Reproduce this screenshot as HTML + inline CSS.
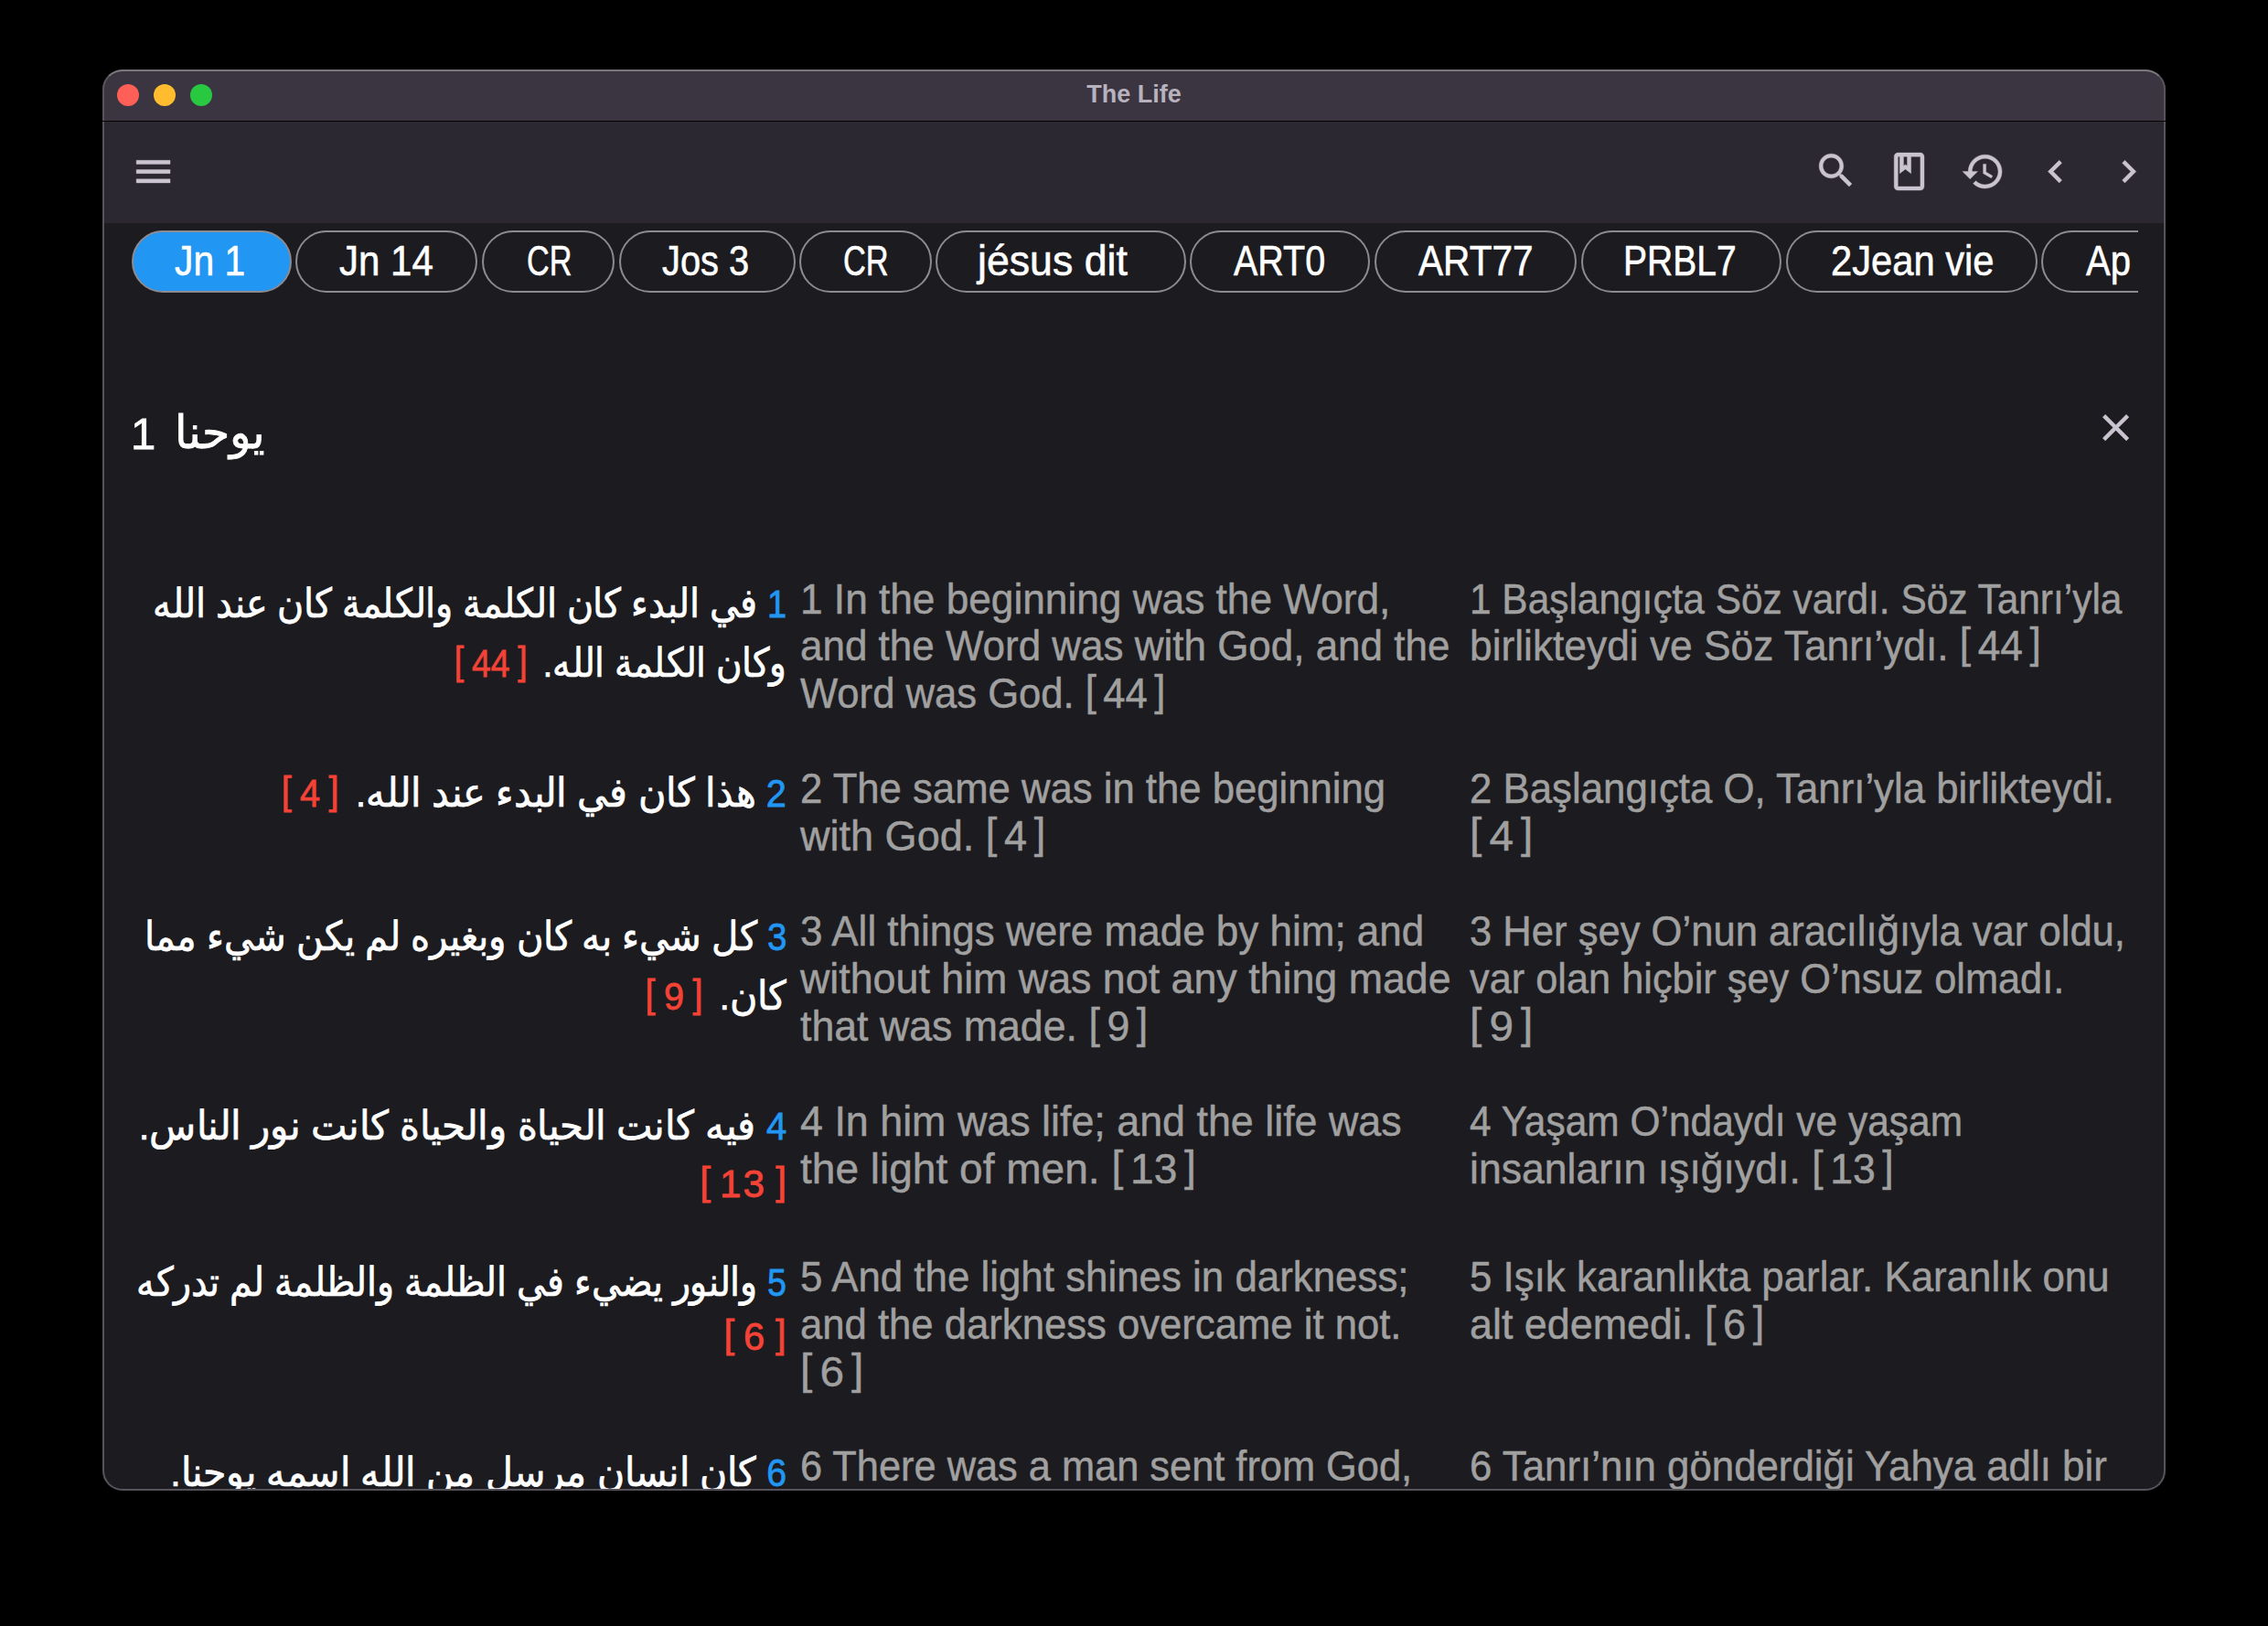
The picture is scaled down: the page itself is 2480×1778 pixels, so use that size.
<!DOCTYPE html>
<html><head><meta charset="utf-8"><title>The Life</title>
<style>
html,body{margin:0;padding:0;background:#000;width:2480px;height:1778px;overflow:hidden;font-family:"Liberation Sans",sans-serif;}
.win{position:absolute;left:112px;top:76px;width:2256px;height:1554px;border-radius:22px;overflow:hidden;background:#1c1b1f;}
.frame{position:absolute;left:112px;top:76px;width:2252px;height:1550px;border:2px solid #56545a;border-top-color:#7a777e;border-radius:22px;}
.title{position:absolute;left:0;top:0;width:100%;height:56px;background:#3b3541;}
.tline{position:absolute;left:0;top:56px;width:100%;height:1px;background:#000;}
.tool{position:absolute;left:0;top:57px;width:100%;height:111px;background:#2c2831;}
.ttl{position:absolute;left:0;width:100%;top:13.5px;text-align:center;font-weight:bold;font-size:27px;line-height:27px;color:#b8b2bf;}
.dot{position:absolute;width:24.5px;height:24.5px;border-radius:50%;top:15.75px;}
.ic{position:absolute;width:49.2px;height:49.2px;}
.chips{position:absolute;left:0;top:0;width:2226px;height:400px;overflow:hidden;}
.chip{position:absolute;top:176px;height:64px;border:2px solid #8d8a90;border-radius:34px;}
.chip.act{background:#2196f3;}
.ct{position:absolute;white-space:nowrap;font-size:47px;line-height:47px;color:#fff;transform-origin:0 0;-webkit-text-stroke:0.6px #fff;}
.tl{position:absolute;white-space:nowrap;font-size:47px;line-height:47px;color:#a0a0a0;transform-origin:0 0;-webkit-text-stroke:0.5px #a0a0a0;}
.al{position:absolute;white-space:nowrap;font-size:44px;line-height:44px;color:#fff;transform-origin:100% 0;-webkit-text-stroke:0.7px #fff;}
.al .b,.al .r{font-size:42px;-webkit-text-stroke:0.8px currentColor;}
.b{color:#2196f3;}
.r{color:#f44336;unicode-bidi:isolate;direction:ltr;margin-right:7px;}
.rn{margin:0 8px;}
.bk{position:relative;top:-3px;}
.r .rn{margin:0 10px;letter-spacing:2px;}
.r.solo{margin-right:0;}
.hd{position:absolute;white-space:nowrap;color:#fff;transform-origin:100% 0;}
.hd{-webkit-text-stroke:0.8px #fff;}
</style></head><body>
<div class="win">
<div class="title"></div><div class="tline"></div><div class="tool"></div>
<div class="ttl">The Life</div>
<div class="dot" style="left:15.75px;background:#fe5f57"></div>
<div class="dot" style="left:55.75px;background:#febc2e"></div>
<div class="dot" style="left:95.75px;background:#28c840"></div>
<svg class="ic" style="left:31.25px;top:86.70px" viewBox="0 0 24 24"><path fill="#cac4d0" stroke="#cac4d0" stroke-width="0.2" d="M3 18h18v-2H3v2zm0-5h18v-2H3v2zm0-7v2h18V6H3z"/></svg>
<svg class="ic" style="left:1870.85px;top:86.35px" viewBox="0 0 24 24"><path fill="#cac4d0" stroke="#cac4d0" stroke-width="0.2" d="M15.5 14h-.79l-.28-.27C15.41 12.590 16 11.11 16 9.5 16 5.91 13.09 3 9.5 3S3 5.91 3 9.5 5.91 16 9.5 16c1.61 0 3.09-.59 4.23-1.57l.27.28v.79l5 4.99L20.490 19l-4.99-5zm-6 0C7.01 14 5 11.99 5 9.5S7.01 5 9.5 5 14 7.01 14 9.5 11.99 14 9.5 14z"/></svg>
<svg class="ic" style="left:1950.80px;top:86.90px" viewBox="0 0 24 24"><path fill="#cac4d0" stroke="#cac4d0" stroke-width="0.2" d="M18 2H6c-1.1 0-2 .9-2 2v16c0 1.1.9 2 2 2h12c1.1 0 2-.9 2-2V4c0-1.1-.9-2-2-2zM9 4h2v5l-1-.75L9 9V4zm9 16H6V4h1v9l3-2.25L13 13V4h5v16z"/></svg>
<svg class="ic" style="left:2031.60px;top:86.50px" viewBox="0 0 24 24"><path fill="#cac4d0" stroke="#cac4d0" stroke-width="0.2" d="M13 3c-4.97 0-9 4.03-9 9H1l3.89 3.89.07.14L9 12H6c0-3.87 3.13-7 7-7s7 3.13 7 7-3.13 7-7 7c-1.93 0-3.68-.79-4.94-2.06l-1.42 1.42C8.27 19.99 10.51 21 13 21c4.97 0 9-4.03 9-9s-4.03-9-9-9zm-1 5v5l4.28 2.54.72-1.21-3.5-2.08V8H12z"/></svg>
<svg class="ic" style="left:2111.20px;top:86.50px" viewBox="0 0 24 24"><path fill="#cac4d0" stroke="#cac4d0" stroke-width="0.2" d="M15.41 7.41L14 6l-6 6 6 6 1.41-1.41L10.83 12z"/></svg>
<svg class="ic" style="left:2191.10px;top:86.50px" viewBox="0 0 24 24"><path fill="#cac4d0" stroke="#cac4d0" stroke-width="0.2" d="M10 6L8.59 7.41 13.170 12l-4.58 4.59L10 18l6-6z"/></svg>
<div class="chips">
<div class="chip act" style="left:32.0px;width:171.0px"></div>
<div class="ct ck" style="left:79.4px;top:184.9px;transform:scaleX(0.8682)">Jn 1</div>
<div class="chip" style="left:210.6px;width:195.6px"></div>
<div class="ct ck" style="left:258.8px;top:184.9px;transform:scaleX(0.8939)">Jn 14</div>
<div class="chip" style="left:415.0px;width:140.5px"></div>
<div class="ct ck" style="left:463.6px;top:184.9px;transform:scaleX(0.7275)">CR</div>
<div class="chip" style="left:564.5px;width:189.0px"></div>
<div class="ct ck" style="left:612.4px;top:184.9px;transform:scaleX(0.8473)">Jos 3</div>
<div class="chip" style="left:762.0px;width:140.5px"></div>
<div class="ct ck" style="left:809.8px;top:184.9px;transform:scaleX(0.7314)">CR</div>
<div class="chip" style="left:911.3px;width:269.5px"></div>
<div class="ct ck" style="left:956.8px;top:184.9px;transform:scaleX(0.9501)">jésus dit</div>
<div class="chip" style="left:1189.3px;width:192.7px"></div>
<div class="ct ck" style="left:1237.2px;top:184.9px;transform:scaleX(0.8399)">ART0</div>
<div class="chip" style="left:1390.7px;width:217.3px"></div>
<div class="ct ck" style="left:1439.0px;top:184.9px;transform:scaleX(0.8636)">ART77</div>
<div class="chip" style="left:1617.2px;width:214.8px"></div>
<div class="ct ck" style="left:1663.0px;top:184.9px;transform:scaleX(0.8301)">PRBL7</div>
<div class="chip" style="left:1840.5px;width:271.5px"></div>
<div class="ct ck" style="left:1890.0px;top:184.9px;transform:scaleX(0.8873)">2Jean vie</div>
<div class="chip" style="left:2120.0px;width:164.0px"></div>
<div class="ct ck" style="left:2168.6px;top:184.9px;transform:scaleX(0.8501)">Ap</div>
</div>
<div class="hd" style="left:31.0px;top:373.8px;font-size:49px;line-height:49px">1</div><div class="hd ar" dir="rtl" style="right:2078.3px;top:371.7px;font-size:50px;line-height:50px;transform:scaleX(0.9784)">يوحنا</div>
<svg class="ic" style="left:2177.25px;top:366.65px" viewBox="0 0 24 24"><path fill="#cac4d0" stroke="#cac4d0" stroke-width="0.2" d="M19 6.41L17.59 5 12 10.59 6.41 5 5 6.41 10.59 12 5 17.59 6.41 19 12 13.41 17.59 19 19 17.59 13.41 12z"/></svg>
<div class="al ar" dir="rtl" style="right:1508.0px;top:562.3px;transform:scaleX(0.9045)"><span class="b">1</span> في البدء كان الكلمة والكلمة كان عند الله</div>
<div class="al ar" dir="rtl" style="right:1508.0px;top:626.8px;transform:scaleX(0.886)">وكان الكلمة الله. <span class="r"><span class="bk">[</span><span class="rn">44</span><span class="bk">]</span></span></div>
<div class="al ar" dir="rtl" style="right:1508.0px;top:769.3px;transform:scaleX(0.9442)"><span class="b">2</span> هذا كان في البدء عند الله. <span class="r"><span class="bk">[</span><span class="rn">4</span><span class="bk">]</span></span></div>
<div class="al ar" dir="rtl" style="right:1508.0px;top:926.3px;transform:scaleX(0.9153)"><span class="b">3</span> كل شيء به كان وبغيره لم يكن شيء مما</div>
<div class="al ar" dir="rtl" style="right:1508.0px;top:990.8px;transform:scaleX(0.9416)">كان. <span class="r"><span class="bk">[</span><span class="rn">9</span><span class="bk">]</span></span></div>
<div class="al ar" dir="rtl" style="right:1508.0px;top:1132.8px;transform:scaleX(0.9534)"><span class="b">4</span> فيه كانت الحياة والحياة كانت نور الناس.</div>
<div class="al ar" dir="rtl" style="right:1508.0px;top:1195.8px;transform:scaleX(1.0089)"><span class="r solo"><span class="bk">[</span><span class="rn">13</span><span class="bk">]</span></span></div>
<div class="al ar" dir="rtl" style="right:1508.0px;top:1303.8px;transform:scaleX(0.8973)"><span class="b">5</span> والنور يضيء في الظلمة والظلمة لم تدركه</div>
<div class="al ar" dir="rtl" style="right:1508.0px;top:1362.8px;transform:scaleX(0.9942)"><span class="r solo"><span class="bk">[</span><span class="rn">6</span><span class="bk">]</span></span></div>
<div class="al ar" dir="rtl" style="right:1508.0px;top:1511.8px;transform:scaleX(0.9346)"><span class="b">6</span> كان انسان مرسل من الله اسمه يوحنا.</div>
<div class="tl en" style="left:763.0px;top:554.5px;transform:scaleX(0.9403)">1 In the beginning was the Word,</div>
<div class="tl en" style="left:763.0px;top:606.2px;transform:scaleX(0.9354)">and the Word was with God, and the</div>
<div class="tl en" style="left:763.0px;top:658.4px;transform:scaleX(0.9277)">Word was God. <span class="bk">[</span><span class="rn">44</span><span class="bk">]</span></div>
<div class="tl en" style="left:763.0px;top:761.6px;transform:scaleX(0.9292)">2 The same was in the beginning</div>
<div class="tl en" style="left:763.0px;top:813.7px;transform:scaleX(0.9584)">with God. <span class="bk">[</span><span class="rn">4</span><span class="bk">]</span></div>
<div class="tl en" style="left:763.0px;top:917.7px;transform:scaleX(0.936)">3 All things were made by him; and</div>
<div class="tl en" style="left:763.0px;top:969.8px;transform:scaleX(0.9524)">without him was not any thing made</div>
<div class="tl en" style="left:763.0px;top:1021.6px;transform:scaleX(0.9506)">that was made. <span class="bk">[</span><span class="rn">9</span><span class="bk">]</span></div>
<div class="tl en" style="left:763.0px;top:1126.0px;transform:scaleX(0.9536)">4 In him was life; and the life was</div>
<div class="tl en" style="left:763.0px;top:1178.1px;transform:scaleX(0.9796)">the light of men. <span class="bk">[</span><span class="rn">13</span><span class="bk">]</span></div>
<div class="tl en" style="left:763.0px;top:1295.8px;transform:scaleX(0.933)">5 And the light shines in darkness;</div>
<div class="tl en" style="left:763.0px;top:1348.2px;transform:scaleX(0.9286)">and the darkness overcame it not.</div>
<div class="tl en" style="left:763.0px;top:1400.2px;transform:scaleX(1.016)"><span class="bk">[</span><span class="rn">6</span><span class="bk">]</span></div>
<div class="tl en" style="left:763.0px;top:1503.4px;transform:scaleX(0.9224)">6 There was a man sent from God,</div>
<div class="tl tk" style="left:1495.0px;top:554.5px;transform:scaleX(0.9022)">1 Başlangıçta Söz vardı. Söz Tanrı’yla</div>
<div class="tl tk" style="left:1495.0px;top:606.2px;transform:scaleX(0.9424)">birlikteydi ve Söz Tanrı’ydı. <span class="bk">[</span><span class="rn">44</span><span class="bk">]</span></div>
<div class="tl tk" style="left:1495.0px;top:761.6px;transform:scaleX(0.9315)">2 Başlangıçta O, Tanrı’yla birlikteydi.</div>
<div class="tl tk" style="left:1495.0px;top:813.7px;transform:scaleX(1.016)"><span class="bk">[</span><span class="rn">4</span><span class="bk">]</span></div>
<div class="tl tk" style="left:1495.0px;top:917.7px;transform:scaleX(0.9272)">3 Her şey O’nun aracılığıyla var oldu,</div>
<div class="tl tk" style="left:1495.0px;top:969.8px;transform:scaleX(0.922)">var olan hiçbir şey O’nsuz olmadı.</div>
<div class="tl tk" style="left:1495.0px;top:1021.6px;transform:scaleX(1.016)"><span class="bk">[</span><span class="rn">9</span><span class="bk">]</span></div>
<div class="tl tk" style="left:1495.0px;top:1126.0px;transform:scaleX(0.9037)">4 Yaşam O’ndaydı ve yaşam</div>
<div class="tl tk" style="left:1495.0px;top:1178.1px;transform:scaleX(0.9486)">insanların ışığıydı. <span class="bk">[</span><span class="rn">13</span><span class="bk">]</span></div>
<div class="tl tk" style="left:1495.0px;top:1295.8px;transform:scaleX(0.9331)">5 Işık karanlıkta parlar. Karanlık onu</div>
<div class="tl tk" style="left:1495.0px;top:1348.2px;transform:scaleX(0.9548)">alt edemedi. <span class="bk">[</span><span class="rn">6</span><span class="bk">]</span></div>
<div class="tl tk" style="left:1495.0px;top:1503.4px;transform:scaleX(0.9324)">6 Tanrı’nın gönderdiği Yahya adlı bir</div>
</div>
<div class="frame"></div>
<div style="position:absolute;left:112px;top:132px;width:2256px;height:1px;background:#000"></div>
</body></html>
